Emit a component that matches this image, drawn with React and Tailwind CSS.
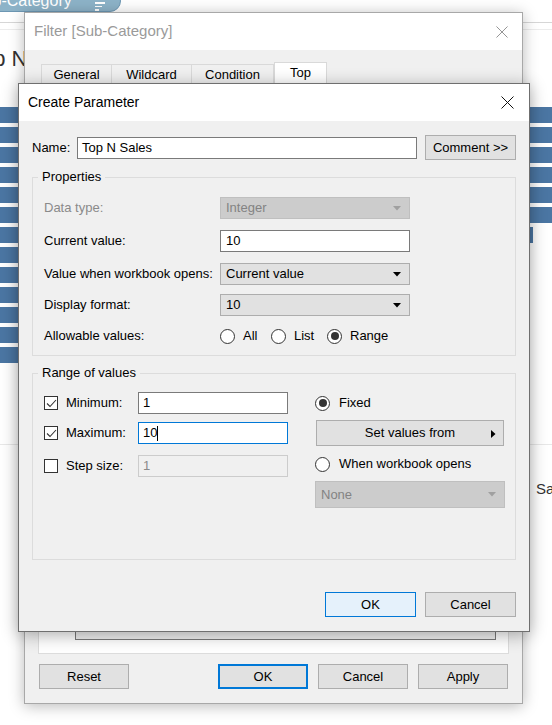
import React from 'react';

const DownArrow = ({ color = '#000' }) => (
  <svg width="8" height="5" viewBox="0 0 8 5">
    <polygon points="0,0 8,0 4,4.5" fill={color} />
  </svg>
);

const CloseX = ({ color = '#000', size = 13 }) => (
  <svg width={size} height={size} viewBox="0 0 13 13">
    <path d="M0.5 0.5 L12.5 12.5 M12.5 0.5 L0.5 12.5" stroke={color} strokeWidth="1" fill="none" />
  </svg>
);

const CheckBox = ({ checked }) => (
  <div className="w-[14px] h-[14px] border border-[#333] bg-white flex items-center justify-center shrink-0">
    {checked && (
      <svg width="11" height="9" viewBox="0 0 11 9">
        <path d="M1 4.5 L4 7.5 L10 1" fill="none" stroke="#333" strokeWidth="1.1" />
      </svg>
    )}
  </div>
);

const Radio = ({ checked }) => (
  <div className="w-[15px] h-[15px] rounded-full border border-[#333] bg-white flex items-center justify-center shrink-0">
    {checked && <div className="w-[8px] h-[8px] rounded-full bg-[#333]" />}
  </div>
);

const Select = ({ value, disabled, className = '' }) => (
  <div
    className={`flex items-center justify-between h-[22px] px-[5px] border ${
      disabled ? 'bg-[#cccccc] border-[#bfbfbf] text-[#838383]' : 'bg-[#e1e1e1] border-[#adadad] text-black'
    } ${className}`}
  >
    <span>{value}</span>
    <span className="mr-[3px]">
      <DownArrow color={disabled ? '#a0a0a0' : '#000'} />
    </span>
  </div>
);

const GroupBox = ({ title, className = '', children }) => (
  <div className={`border border-[#dcdcdc] ${className}`}>
    <div className="-mt-[9px] ml-[5px] px-[4px] w-fit bg-[#f0f0f0] leading-[16px]">{title}</div>
    {children}
  </div>
);

export default function App() {
  const leftBars = Array.from({ length: 13 });
  const rightBars = Array.from({ length: 6 });

  return (
    <div className="relative w-[552px] h-[725px] overflow-hidden bg-white text-[13px] text-black font-['Liberation_Sans',Arial,sans-serif]">
      {/* workbook behind the dialogs */}
      <div className="absolute -left-[40px] -top-[10px] h-[22px] w-[161px] rounded-r-full bg-[#8db3c8] border border-[#6d97b3] flex items-start pl-[12px] pt-[1px] text-white text-[16px] leading-[18px]">
        <span>Sub-Category</span>
        <span className="ml-[23px] mt-[10px] flex flex-col gap-[2px]">
          <span className="block w-[10px] h-[1.5px] bg-white" />
          <span className="block w-[7px] h-[1.5px] bg-white" />
          <span className="block w-[4px] h-[1.5px] bg-white" />
        </span>
      </div>
      <div className="absolute left-0 top-[22px] w-[552px] h-px bg-[#d6d6d6]" />
      <div className="absolute left-0 top-[29px] w-[552px] h-px bg-[#ececec]" />
      <div className="absolute -left-[30px] top-[45px] text-[22px] leading-[28px] text-[#333]">Top N Sales</div>

      <div className="absolute left-0 top-[107px] flex flex-col gap-[4px]">
        {leftBars.map((_, i) => (
          <div key={i} className="w-[30px] h-[16px] bg-[#4b76a3]" />
        ))}
      </div>
      <div className="absolute left-[530px] top-[107px] flex flex-col gap-[4px]">
        {rightBars.map((_, i) => (
          <div key={i} className="w-[22px] h-[16px] bg-[#4b76a3]" />
        ))}
        <div className="w-[3px] h-[16px] bg-[#4b76a3]" />
      </div>
      <div className="absolute left-0 top-[444px] w-[552px] h-px bg-[#e8e8e8]" />
      <div className="absolute left-[536px] top-[480px] text-[15px] leading-[18px] text-[#333]">Sales</div>

      {/* Filter dialog */}
      <div className="absolute left-[24px] top-[12px] w-[499px] h-[692px] flex flex-col border border-[#a8a8a8] bg-[#f0f0f0] shadow-[0_2px_14px_rgba(0,0,0,0.28)]">
        <div className="h-[37px] bg-white flex items-center justify-between pl-[9px] pr-[14px] shrink-0">
          <span className="text-[15px] text-[#9a9a9a]">Filter [Sub-Category]</span>
          <CloseX color="#8c8c8c" size={12} />
        </div>
        <div className="flex items-end pl-[16px] mt-[12px] h-[22px] shrink-0">
          <div className="w-[71px] h-[20px] border border-b-0 border-[#d9d9d9] flex items-center justify-center">General</div>
          <div className="w-[80px] h-[20px] border border-b-0 border-l-0 border-[#d9d9d9] flex items-center justify-center">Wildcard</div>
          <div className="w-[82px] h-[20px] border border-b-0 border-l-0 border-[#d9d9d9] flex items-center justify-center">Condition</div>
          <div className="w-[53px] h-[22px] border border-b-0 border-[#d9d9d9] bg-white flex items-center justify-center pb-[1px]">Top</div>
        </div>
        <div className="flex-1 mx-[13px] bg-white border border-[#dcdcdc] flex flex-col justify-end">
          <div className="h-[120px] ml-[36px] mr-[12px] mb-[13px] border border-[#7a7a7a] bg-[#f0f0f0]" />
        </div>
        <div className="flex items-center px-[14px] mt-[10px] mb-[14px] shrink-0">
          <div className="w-[90px] h-[25px] border border-[#adadad] bg-[#e1e1e1] flex items-center justify-center">Reset</div>
          <div className="flex-1" />
          <div className="w-[90px] h-[25px] border-2 border-[#0078d7] bg-[#e1e1e1] flex items-center justify-center">OK</div>
          <div className="w-[90px] h-[25px] ml-[10px] border border-[#adadad] bg-[#e1e1e1] flex items-center justify-center">Cancel</div>
          <div className="w-[90px] h-[25px] ml-[10px] border border-[#adadad] bg-[#e1e1e1] flex items-center justify-center">Apply</div>
        </div>
      </div>

      {/* Create Parameter dialog */}
      <div className="absolute left-[18px] top-[83px] w-[512px] border border-[#6f6f6f] bg-[#f0f0f0] shadow-[0_3px_16px_rgba(0,0,0,0.32)]">
        <div className="h-[37px] bg-white flex items-center justify-between pl-[9px] pr-[15px]">
          <span className="text-[14px]">Create Parameter</span>
          <CloseX color="#111" size={13} />
        </div>

        <div className="px-[13px]">
          <div className="flex items-center mt-[14px] h-[25px]">
            <span className="w-[45px]">Name:</span>
            <div className="w-[340px] h-[22px] border border-[#7a7a7a] bg-white flex items-center pl-[4px]">Top N Sales</div>
            <div className="ml-[8px] w-[91px] h-[25px] border border-[#adadad] bg-[#e1e1e1] flex items-center justify-center">Comment &gt;&gt;</div>
          </div>

          <GroupBox title="Properties" className="mt-[17px] pb-[8px]">
            <div className="pl-[11px]">
              <div className="flex items-center h-[22px] mt-[12px]">
                <span className="w-[176px] text-[#8a8a8a]">Data type:</span>
                <Select value="Integer" disabled className="w-[190px]" />
              </div>
              <div className="flex items-center h-[22px] mt-[11px]">
                <span className="w-[176px]">Current value:</span>
                <div className="w-[190px] h-[22px] border border-[#7a7a7a] bg-white flex items-center pl-[5px]">10</div>
              </div>
              <div className="flex items-center h-[22px] mt-[11px]">
                <span className="w-[176px]">Value when workbook opens:</span>
                <Select value="Current value" className="w-[190px]" />
              </div>
              <div className="flex items-center h-[22px] mt-[9px]">
                <span className="w-[176px]">Display format:</span>
                <Select value="10" className="w-[190px]" />
              </div>
              <div className="flex items-center h-[22px] mt-[9px]">
                <span className="w-[176px]">Allowable values:</span>
                <div className="w-[51px] flex items-center gap-[8px]">
                  <Radio />
                  <span>All</span>
                </div>
                <div className="w-[56px] flex items-center gap-[8px]">
                  <Radio />
                  <span>List</span>
                </div>
                <div className="flex items-center gap-[8px]">
                  <Radio checked />
                  <span>Range</span>
                </div>
              </div>
            </div>
          </GroupBox>

          <GroupBox title="Range of values" className="mt-[17px] pb-[51px]">
            <div className="flex pl-[11px] mt-[11px]">
              <div className="w-[244px]">
                <div className="flex items-center h-[22px]">
                  <CheckBox checked />
                  <span className="w-[72px] ml-[8px]">Minimum:</span>
                  <div className="w-[150px] h-[22px] border border-[#7a7a7a] bg-white flex items-center pl-[4px]">1</div>
                </div>
                <div className="flex items-center h-[22px] mt-[8px]">
                  <CheckBox checked />
                  <span className="w-[72px] ml-[8px]">Maximum:</span>
                  <div className="w-[150px] h-[22px] border border-[#0078d7] bg-white flex items-center pl-[4px]">
                    10<span className="inline-block w-px h-[15px] bg-black" />
                  </div>
                </div>
                <div className="flex items-center h-[22px] mt-[11px]">
                  <CheckBox />
                  <span className="w-[72px] ml-[8px]">Step size:</span>
                  <div className="w-[150px] h-[22px] border border-[#cccccc] bg-[#f0f0f0] text-[#8a8a8a] flex items-center pl-[4px]">1</div>
                </div>
              </div>
              <div className="ml-[27px] w-[190px]">
                <div className="flex items-center h-[22px] gap-[9px]">
                  <Radio checked />
                  <span>Fixed</span>
                </div>
                <div className="ml-[1px] mt-[6px] w-[188px] h-[26px] border border-[#adadad] bg-[#e1e1e1] flex items-center justify-center relative">
                  <span>Set values from</span>
                  <svg className="absolute right-[7px] top-[9px]" width="5" height="8" viewBox="0 0 5 8">
                    <polygon points="0,0 4.5,4 0,8" fill="#000" />
                  </svg>
                </div>
                <div className="flex items-center h-[22px] gap-[9px] mt-[7px]">
                  <Radio />
                  <span>When workbook opens</span>
                </div>
                <Select value="None" disabled className="w-[190px] h-[27px] mt-[6px]" />
              </div>
            </div>
          </GroupBox>

          <div className="flex justify-end gap-[9px] mt-[32px] pb-[14px]">
            <div className="w-[91px] h-[25px] border border-[#0078d7] bg-[#e5f1fb] flex items-center justify-center">OK</div>
            <div className="w-[91px] h-[25px] border border-[#adadad] bg-[#e1e1e1] flex items-center justify-center">Cancel</div>
          </div>
        </div>
      </div>
    </div>
  );
}
